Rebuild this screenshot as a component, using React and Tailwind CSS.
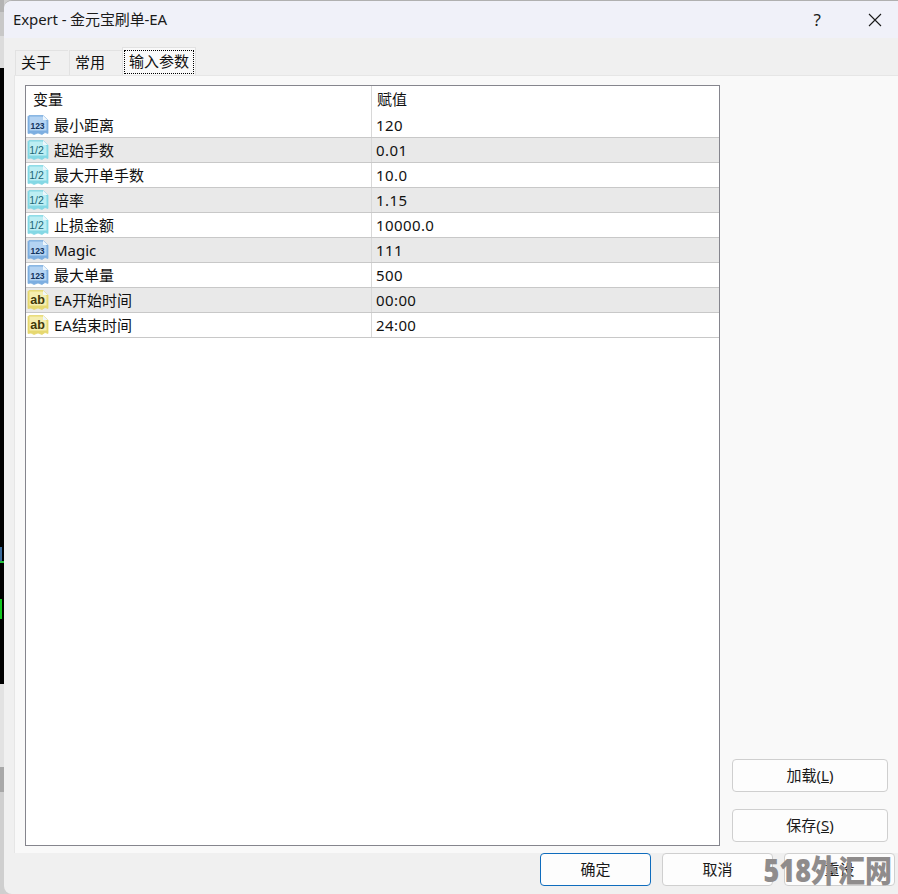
import React from 'react';

const FONT = '"Noto Sans", "Noto Sans CJK SC", sans-serif';

// small parameter-type icons from the list
const TypeIcon = ({ type }) => {
    const styles = {
        int: { fill: '#7daee0', inner: '#b4d3f2', ink: '#12325f', label: '123', size: 8.5, x: 10.5 },
        dbl: { fill: '#84d8e4', inner: '#bdeef3', ink: '#1a6676', label: '1/2', size: 10.5, x: 9.5 },
        str: { fill: '#e6d870', inner: '#f5eeb0', ink: '#40380c', label: 'ab', size: 12.5, x: 10.5 },
    };
    const s = styles[type];
    return (
        <svg width="22" height="22" viewBox="0 0 22 22" className="shrink-0">
            <path
                d="M2 1.5 H16 L21 6 V19.5 L18 18.5 L15 20.5 L11 19 L7 20.5 L4 19 L1 19.5 V2.5 Z"
                fill={s.fill}
                stroke={s.fill}
                strokeWidth="0.8"
            />
            <path d="M2.5 2.5 H15.5 L19.5 7 V16.5 H2.5 Z" fill={s.inner} />
            <path d="M16 1.5 V6 H21 Z" fill="#eef6fc" />
            <text
                x={s.x}
                y={type === 'str' ? 15 : 14.5}
                textAnchor="middle"
                fontFamily='"Liberation Sans", sans-serif'
                fontWeight={type === 'dbl' ? 400 : 700}
                fontSize={s.size}
                fill={s.ink}
            >
                {s.label}
            </text>
        </svg>
    );
};

const rows = [
    { name: '最小距离', value: '120', type: 'int' },
    { name: '起始手数', value: '0.01', type: 'dbl' },
    { name: '最大开单手数', value: '10.0', type: 'dbl' },
    { name: '倍率', value: '1.15', type: 'dbl' },
    { name: '止损金额', value: '10000.0', type: 'dbl' },
    { name: 'Magic', value: '111', type: 'int' },
    { name: '最大单量', value: '500', type: 'int' },
    { name: 'EA开始时间', value: '00:00', type: 'str' },
    { name: 'EA结束时间', value: '24:00', type: 'str' },
];

const SideButton = ({ children }) => (
    <button className="w-[156px] h-[33px] rounded-[4px] border border-[#cfcfcf] bg-[#fdfdfd] text-[15px] text-[#1a1a1a] flex items-center justify-center">
        {children}
    </button>
);

const FootButton = ({ children, primary }) => (
    <button
        className={`w-[111px] h-[33px] rounded-[4px] border bg-[#fdfdfd] text-[15px] text-[#1a1a1a] flex items-center justify-center ${primary ? 'border-[#0f6cbd]' : 'border-[#cfcfcf]'}`}
    >
        {children}
    </button>
);

const App = () => {
    return (
        <div className="relative flex w-[898px] h-[894px] overflow-hidden bg-[#d0d0d0]" style={{ fontFamily: FONT }}>
            {/* app behind the dialog */}
            <div className="w-[4px] shrink-0 flex flex-col">
                <div className="h-[12px] bg-[#b4b4b4]" />
                <div className="h-[24px] bg-[#c8c8c8]" />
                <div className="h-[32px] bg-[#dcdcdc]" />
                <div className="h-[616px] bg-black flex flex-col">
                    <div className="h-[479px]" />
                    <div className="h-[14px] w-[2px] bg-[#3a6a9a]" />
                    <div className="h-[2px] bg-[#22c03a]" />
                    <div className="h-[36px]" />
                    <div className="h-[20px] w-[2px] bg-[#12c820]" />
                </div>
                <div className="h-[83px] bg-[#e2e2e2]" />
                <div className="h-[25px] bg-[#a8a8a8]" />
                <div className="flex-1 bg-[#cfcfcf]" />
            </div>

            <div className="flex-1 flex flex-col min-w-0 rounded-l-[8px] overflow-hidden bg-[#f0f0f0] border-t border-[#b0b0b0]">
                {/* title bar */}
                <div className="h-[37px] shrink-0 bg-[#f0f1f9] flex items-center pl-[9px] text-[15px] text-[#1a1a1a]">
                    <span className="tracking-[-0.12px]">Expert - 金元宝刷单-EA</span>
                    <span className="ml-auto text-[17px] mr-[47px]">?</span>
                    <svg width="14" height="14" viewBox="0 0 14 14" className="mr-[16px]">
                        <path d="M1 1 L13 13 M13 1 L1 13" stroke="#1a1a1a" strokeWidth="1.1" />
                    </svg>
                </div>

                {/* tabs */}
                <div className="h-[37px] shrink-0 flex items-end pl-[11px] text-[15px] text-[#111]">
                    <div className="w-[53px] h-[25px] pb-[2px] pl-[5px] border-l border-t border-[#e2e2e2] flex items-center">关于</div>
                    <div className="ml-[1px] w-[53px] h-[25px] pb-[2px] pl-[5px] border-l border-t border-[#e2e2e2] flex items-center">常用</div>
                    <div className="w-[74px] h-[28px] bg-[#f9f9f9] border-x border-t border-[#e2e2e2] flex items-center justify-center">
                        <span className="w-[70px] h-[24px] border border-dotted border-black flex items-center justify-center">输入参数</span>
                    </div>
                </div>

                {/* page */}
                <div className="flex-1 min-h-0 ml-[10px] bg-[#f9f9f9] border-l border-t border-[#e6e6e6] flex pl-[10px] pt-[9px] pb-[7px]">
                    <div className="w-[695px] shrink-0 bg-white border border-[#85858d] text-[15px] text-[#111]">
                        <div className="h-[27px] flex items-center">
                            <div className="w-[346px] pl-[7px] border-r border-[#d8d8d8] h-full flex items-center">变量</div>
                            <div className="pl-[5px]">赋值</div>
                        </div>
                        {rows.map((row, i) => (
                            <div
                                key={row.name}
                                className={`h-[25px] flex items-center border-b border-[#c8c8c8] ${i % 2 ? 'bg-[#e9e9e9]' : 'bg-white'}`}
                            >
                                <div className="w-[346px] h-full pl-[1px] border-r border-[#d8d8d8] flex items-center gap-[5px]">
                                    <TypeIcon type={row.type} />
                                    <span>{row.name}</span>
                                </div>
                                <div className="pl-[4px] tracking-[0.4px]">{row.value}</div>
                            </div>
                        ))}
                    </div>
                    <div className="flex-1 flex flex-col items-end justify-end gap-[17px] pr-[10px] pb-[4px]">
                        <SideButton>
                            <span>加载(<span className="underline">L</span>)</span>
                        </SideButton>
                        <SideButton>
                            <span>保存(<span className="underline">S</span>)</span>
                        </SideButton>
                    </div>
                </div>

                {/* footer */}
                <div className="h-[41px] shrink-0 flex justify-end gap-[11px] pr-[3px]">
                    <FootButton primary>确定</FootButton>
                    <FootButton>取消</FootButton>
                    <FootButton>重设</FootButton>
                </div>
            </div>

            {/* watermark */}
            <div className="absolute right-[6px] bottom-[9px] text-[27px] leading-[30px] font-black text-[#8f8c8c] scale-y-[1.15]">
                518外汇网
            </div>
        </div>
    );
};

export default App;
